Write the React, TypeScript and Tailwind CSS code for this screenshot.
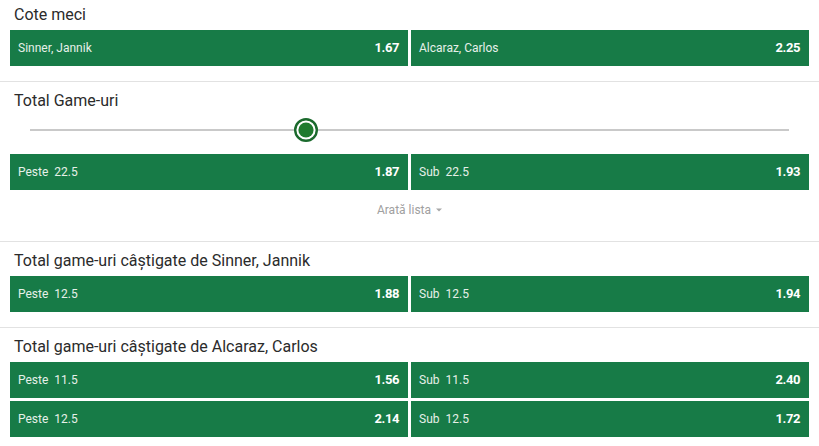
type Odd = { label: string; line?: string; price: string };

function OddButton({ odd }: { odd: Odd }) {
  return (
    <button className="flex-1 h-[36px] bg-[#177b47] flex items-center justify-between pl-[8px] pr-[9px] text-left">
      <span className="text-[12px] text-[#e6f0e9]">
        {odd.label}
        {odd.line && <span className="ml-[6px]">{odd.line}</span>}
      </span>
      <span className="text-[13px] font-bold text-white tracking-[-0.4px]">{odd.price}</span>
    </button>
  );
}

function OddRow({ left, right }: { left: Odd; right: Odd }) {
  return (
    <div className="flex gap-[3px]">
      <OddButton odd={left} />
      <OddButton odd={right} />
    </div>
  );
}

function Title({ children }: { children: React.ReactNode }) {
  return <h3 className="h-[30px] flex items-center px-[4px] text-[16px] text-[#2b2b2b]">{children}</h3>;
}

export default function App() {
  return (
    <div className="w-[819px] h-[446px] bg-white overflow-hidden px-[10px]" style={{ fontFamily: 'Roboto, "Liberation Sans", sans-serif' }}>
      {/* Cote meci */}
      <section className="pb-[15px] border-b border-[#e2e2e2] -mx-[10px] px-[10px]">
        <Title>Cote meci</Title>
        <OddRow
          left={{ label: 'Sinner, Jannik', price: '1.67' }}
          right={{ label: 'Alcaraz, Carlos', price: '2.25' }}
        />
      </section>

      {/* Total Game-uri */}
      <section className="pt-[4px] border-b border-[#e2e2e2] -mx-[10px] px-[10px]">
        <Title>Total Game-uri</Title>
        <div className="relative h-[28px] mx-[20px] flex items-center">
          <div className="w-full h-[2px] bg-[#c9c9c9]" />
          <svg className="absolute left-[264px] top-[2px]" width="24" height="24" viewBox="0 0 24 24">
            <circle cx="12" cy="12" r="10.8" fill="white" stroke="#1b6a2d" strokeWidth="2.4" />
            <circle cx="12" cy="12" r="7.6" fill="#1f7a2e" />
          </svg>
        </div>
        <div className="mt-[10px]">
          <OddRow
            left={{ label: 'Peste', line: '22.5', price: '1.87' }}
            right={{ label: 'Sub', line: '22.5', price: '1.93' }}
          />
        </div>
        <div className="pt-[10px] pb-[21px] flex justify-center">
          <button className="h-[20px] flex items-center gap-[5px] text-[12px] text-[#a0a0a0]">
            Arată lista
            <svg width="6" height="4" viewBox="0 0 6 4">
              <path d="M0 0.5 L6 0.5 L3 3.5 Z" fill="#a8a8a8" />
            </svg>
          </button>
        </div>
      </section>

      {/* Sinner */}
      <section className="pt-[4px] pb-[15px] border-b border-[#e2e2e2] -mx-[10px] px-[10px]">
        <Title>Total game-uri câștigate de Sinner, Jannik</Title>
        <OddRow
          left={{ label: 'Peste', line: '12.5', price: '1.88' }}
          right={{ label: 'Sub', line: '12.5', price: '1.94' }}
        />
      </section>

      {/* Alcaraz */}
      <section className="pt-[4px] -mx-[10px] px-[10px]">
        <Title>Total game-uri câștigate de Alcaraz, Carlos</Title>
        <div className="flex flex-col gap-[3px]">
          <OddRow
            left={{ label: 'Peste', line: '11.5', price: '1.56' }}
            right={{ label: 'Sub', line: '11.5', price: '2.40' }}
          />
          <OddRow
            left={{ label: 'Peste', line: '12.5', price: '2.14' }}
            right={{ label: 'Sub', line: '12.5', price: '1.72' }}
          />
        </div>
      </section>
    </div>
  );
}
